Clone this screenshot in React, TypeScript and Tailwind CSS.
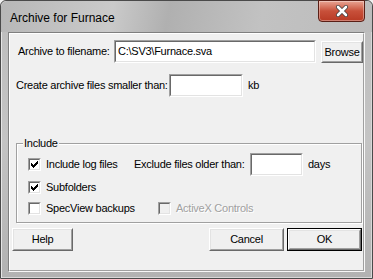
import React from 'react';

const font = { fontFamily: '"Liberation Sans", Arial, sans-serif' };

function Sunken({ className = '', children }: { className?: string; children?: React.ReactNode }) {
  return (
    <div className={`border border-t-[#a0a0a0] border-l-[#a0a0a0] border-r-white border-b-white ${className}`}>
      <div className="w-full h-full border border-t-[#696969] border-l-[#696969] border-r-[#e3e3e3] border-b-[#e3e3e3] bg-white flex items-center px-[2px] text-[11px] text-black">
        {children}
      </div>
    </div>
  );
}

function Btn({ label, className = '', def = false }: { label: string; className?: string; def?: boolean }) {
  const inner = (
    <div className="w-full h-full border border-t-white border-l-white border-r-[#696969] border-b-[#696969] bg-[#f0f0f0]">
      <div className="w-full h-full border border-t-[#e3e3e3] border-l-[#e3e3e3] border-r-[#a0a0a0] border-b-[#a0a0a0] flex items-center justify-center text-[11px] text-black">
        {label}
      </div>
    </div>
  );
  return def ? <div className={`border border-black ${className}`}>{inner}</div> : <div className={className}>{inner}</div>;
}

function Check({ checked = false, disabled = false }: { checked?: boolean; disabled?: boolean }) {
  return (
    <div className="w-[13px] h-[13px] shrink-0 border border-t-[#a0a0a0] border-l-[#a0a0a0] border-r-white border-b-white">
      <div
        className={`w-full h-full border border-t-[#696969] border-l-[#696969] border-r-[#e3e3e3] border-b-[#e3e3e3] ${
          disabled ? 'bg-[#f0f0f0]' : 'bg-white'
        } flex items-center justify-center`}
      >
        {checked && (
          <svg width="7" height="7" viewBox="0 0 7 7" shapeRendering="crispEdges">
            <path d="M0 2h1v3h-1z M1 3h1v3h-1z M2 4h1v3h-1z M3 3h1v3h-1z M4 2h1v3h-1z M5 1h1v3h-1z M6 0h1v3h-1z" fill="#000" />
          </svg>
        )}
      </div>
    </div>
  );
}

export default function App() {
  return (
    <div className="w-[373px] h-[279px] overflow-hidden bg-[#f0f0f0]" style={font}>
      <div className="w-full h-full flex flex-col rounded-t-[6px] border border-[#4a4a4a] bg-gradient-to-b from-[#bdbdbd] via-[#c4c4c4] to-[#b2b2b2] shadow-[inset_1px_1px_0_#e6e6e6,inset_-1px_-1px_0_#d8d8d8]">
        {/* Title bar */}
        <div className="h-[31px] shrink-0 flex items-start bg-[linear-gradient(100deg,#b7b7b7_0%,#cacaca_30%,#b0b0b0_45%,#c2c2c2_70%,#bcbcbc_100%)] rounded-t-[6px]">
          <div className="pl-[9px] pt-[8px] text-[12px] text-black" style={font}>
            Archive for Furnace
          </div>
          <div className="ml-auto mr-[7px] w-[47px] h-[22px] -mt-px rounded-b-[4px] border border-[#5a1f16] bg-gradient-to-b from-[#e8a493] via-[#c8503a] to-[#b83a24] flex items-center justify-center shadow-[inset_0_0_0_1px_rgba(255,255,255,0.35)]">
            <svg width="16" height="12" viewBox="0 0 16 12">
              <path d="M4 2 L12 10 M12 2 L4 10" stroke="#3a3a3a" strokeWidth="4" strokeLinecap="round" fill="none" />
              <path d="M4 2 L12 10 M12 2 L4 10" stroke="#fff" strokeWidth="2.6" strokeLinecap="round" fill="none" />
            </svg>
          </div>
        </div>

        {/* Client area */}
        <div className="flex-1 mx-[7px] mb-[6px] border border-t-[#7f7f7f] border-l-[#7f7f7f] border-r-[#f8f8f8] border-b-[#f8f8f8]">
          <div className="w-full h-full bg-[#f0f0f0] border border-t-white border-l-white border-r-[#a0a0a0] border-b-[#a0a0a0] flex flex-col text-[11px] tracking-[-0.25px] text-black">
            {/* Row 1 */}
            <div className="flex items-center mt-[6px] pl-[8px]">
              <span className="w-[96px] shrink-0">Archive to filename:</span>
              <Sunken className="w-[202px] h-[23px]">C:\SV3\Furnace.sva</Sunken>
              <Btn label="Browse" className="ml-[5px] w-[42px] h-[22px] mt-px" />
            </div>

            {/* Row 2 */}
            <div className="flex items-center mt-[11px] pl-[6px]">
              <span className="w-[153px] shrink-0">Create archive files smaller than:</span>
              <Sunken className="w-[74px] h-[23px]" />
              <span className="ml-[5px]">kb</span>
            </div>

            {/* Group box */}
            <div className="relative ml-[6px] mt-[46px] w-[346px] h-[80px] border border-[#a0a0a0] shadow-[inset_1px_1px_0_#fff,1px_1px_0_#fff]">
              <span className="absolute -top-[7px] left-[6px] bg-[#f0f0f0] px-[1px] leading-[12px]">Include</span>
              <div className="flex flex-col pl-[11px] pt-[9px]">
                <div className="flex items-center h-[23px]">
                  <Check checked />
                  <span className="ml-[5px] w-[88px]">Include log files</span>
                  <span className="w-[116px]">Exclude files older than:</span>
                  <Sunken className="w-[53px] h-[23px]" />
                  <span className="ml-[5px]">days</span>
                </div>
                <div className="flex items-center h-[22px]">
                  <Check checked />
                  <span className="ml-[5px]">Subfolders</span>
                </div>
                <div className="flex items-center h-[21px]">
                  <Check />
                  <span className="ml-[5px] w-[112px]">SpecView backups</span>
                  <Check disabled />
                  <span className="ml-[5px] text-[#a0a0a0] [text-shadow:1px_1px_0_#fff]">ActiveX Controls</span>
                </div>
              </div>
            </div>

            {/* Buttons */}
            <div className="flex items-center mt-[5px] pl-[2px]">
              <Btn label="Help" className="w-[61px] h-[23px]" />
              <Btn label="Cancel" className="ml-auto w-[75px] h-[23px]" />
              <Btn label="OK" def className="ml-[3px] mr-[1px] w-[75px] h-[23px]" />
            </div>
          </div>
        </div>
      </div>
    </div>
  );
}
